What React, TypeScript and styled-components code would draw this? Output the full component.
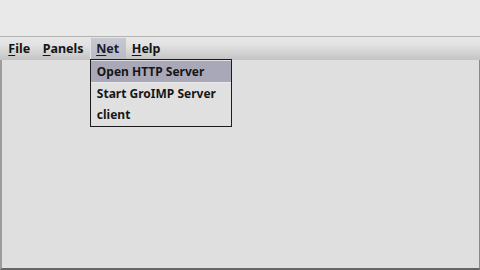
import React from 'react'
import styled, { createGlobalStyle } from 'styled-components'

const GlobalStyle = createGlobalStyle`
  html, body {
    margin: 0;
    padding: 0;
    width: 480px;
    height: 270px;
    overflow: hidden;
    background: #e9e9e9;
    font-family: "Noto Sans", "Open Sans", sans-serif;
  }
`

const Window = styled.div`
  display: flex;
  flex-direction: column;
  width: 480px;
  height: 270px;
`

const TitleArea = styled.div`
  height: 36px;
  background: #e9e9e9;
`

const MenuBar = styled.div`
  position: relative;
  display: flex;
  align-items: stretch;
  height: 23px;
  padding-left: 2px;
  border-top: 1px solid #b3b3b3;
  background: linear-gradient(#e8e8e8 0%, #e2e2e2 35%, #cdcdcd 80%, #c3c3c3 100%);
`

const MenuItem = styled.div<{ $open?: boolean }>`
  position: relative;
  display: flex;
  align-items: center;
  padding: 0 6.3px 1px;
  font-size: 12.5px;
  font-weight: 700;
  color: ${p => (p.$open ? '#1b1b33' : '#151515')};
  background: ${p => (p.$open ? 'linear-gradient(#c9c9d0, #b9b9c4)' : 'transparent')};
  box-shadow: ${p => (p.$open ? 'inset 1px 1px 0 #e4e4ea' : 'none')};
`

const Mnemonic = styled.span`
  text-decoration: underline;
  text-underline-offset: 2px;
`

const Dropdown = styled.div`
  position: absolute;
  top: 22px;
  left: 0;
  width: 140px;
  padding: 1px 0 1px;
  background: #e0e0e0;
  border: 1px solid #1c1c1c;
  display: flex;
  flex-direction: column;
  z-index: 2;
`

const DropItem = styled.div<{ $selected?: boolean }>`
  display: flex;
  align-items: center;
  height: 21px;
  padding-left: 6px;
  font-size: 12px;
  font-weight: 700;
  color: #161616;
  white-space: nowrap;
  background: ${p => (p.$selected ? '#a9a8b9' : 'transparent')};
  border-bottom: ${p => (p.$selected ? '1px solid #ececec' : 'none')};
`

const Body = styled.div`
  flex: 1;
  background: #dfdfdf;
  border-left: 2px solid #9c9c9c;
  border-right: 1px solid #8a8a8a;
  border-bottom: 2px solid #666;
`

const App = () => {
  return (
    <Window>
      <GlobalStyle />
      <TitleArea />
      <MenuBar>
        <MenuItem><span><Mnemonic>F</Mnemonic>ile</span></MenuItem>
        <MenuItem><span><Mnemonic>P</Mnemonic>anels</span></MenuItem>
        <MenuItem $open>
          <span><Mnemonic>N</Mnemonic>et</span>
          <Dropdown>
            <DropItem $selected>Open HTTP Server</DropItem>
            <DropItem>Start GroIMP Server</DropItem>
            <DropItem>client</DropItem>
          </Dropdown>
        </MenuItem>
        <MenuItem><span><Mnemonic>H</Mnemonic>elp</span></MenuItem>
      </MenuBar>
      <Body />
    </Window>
  )
}

export default App
